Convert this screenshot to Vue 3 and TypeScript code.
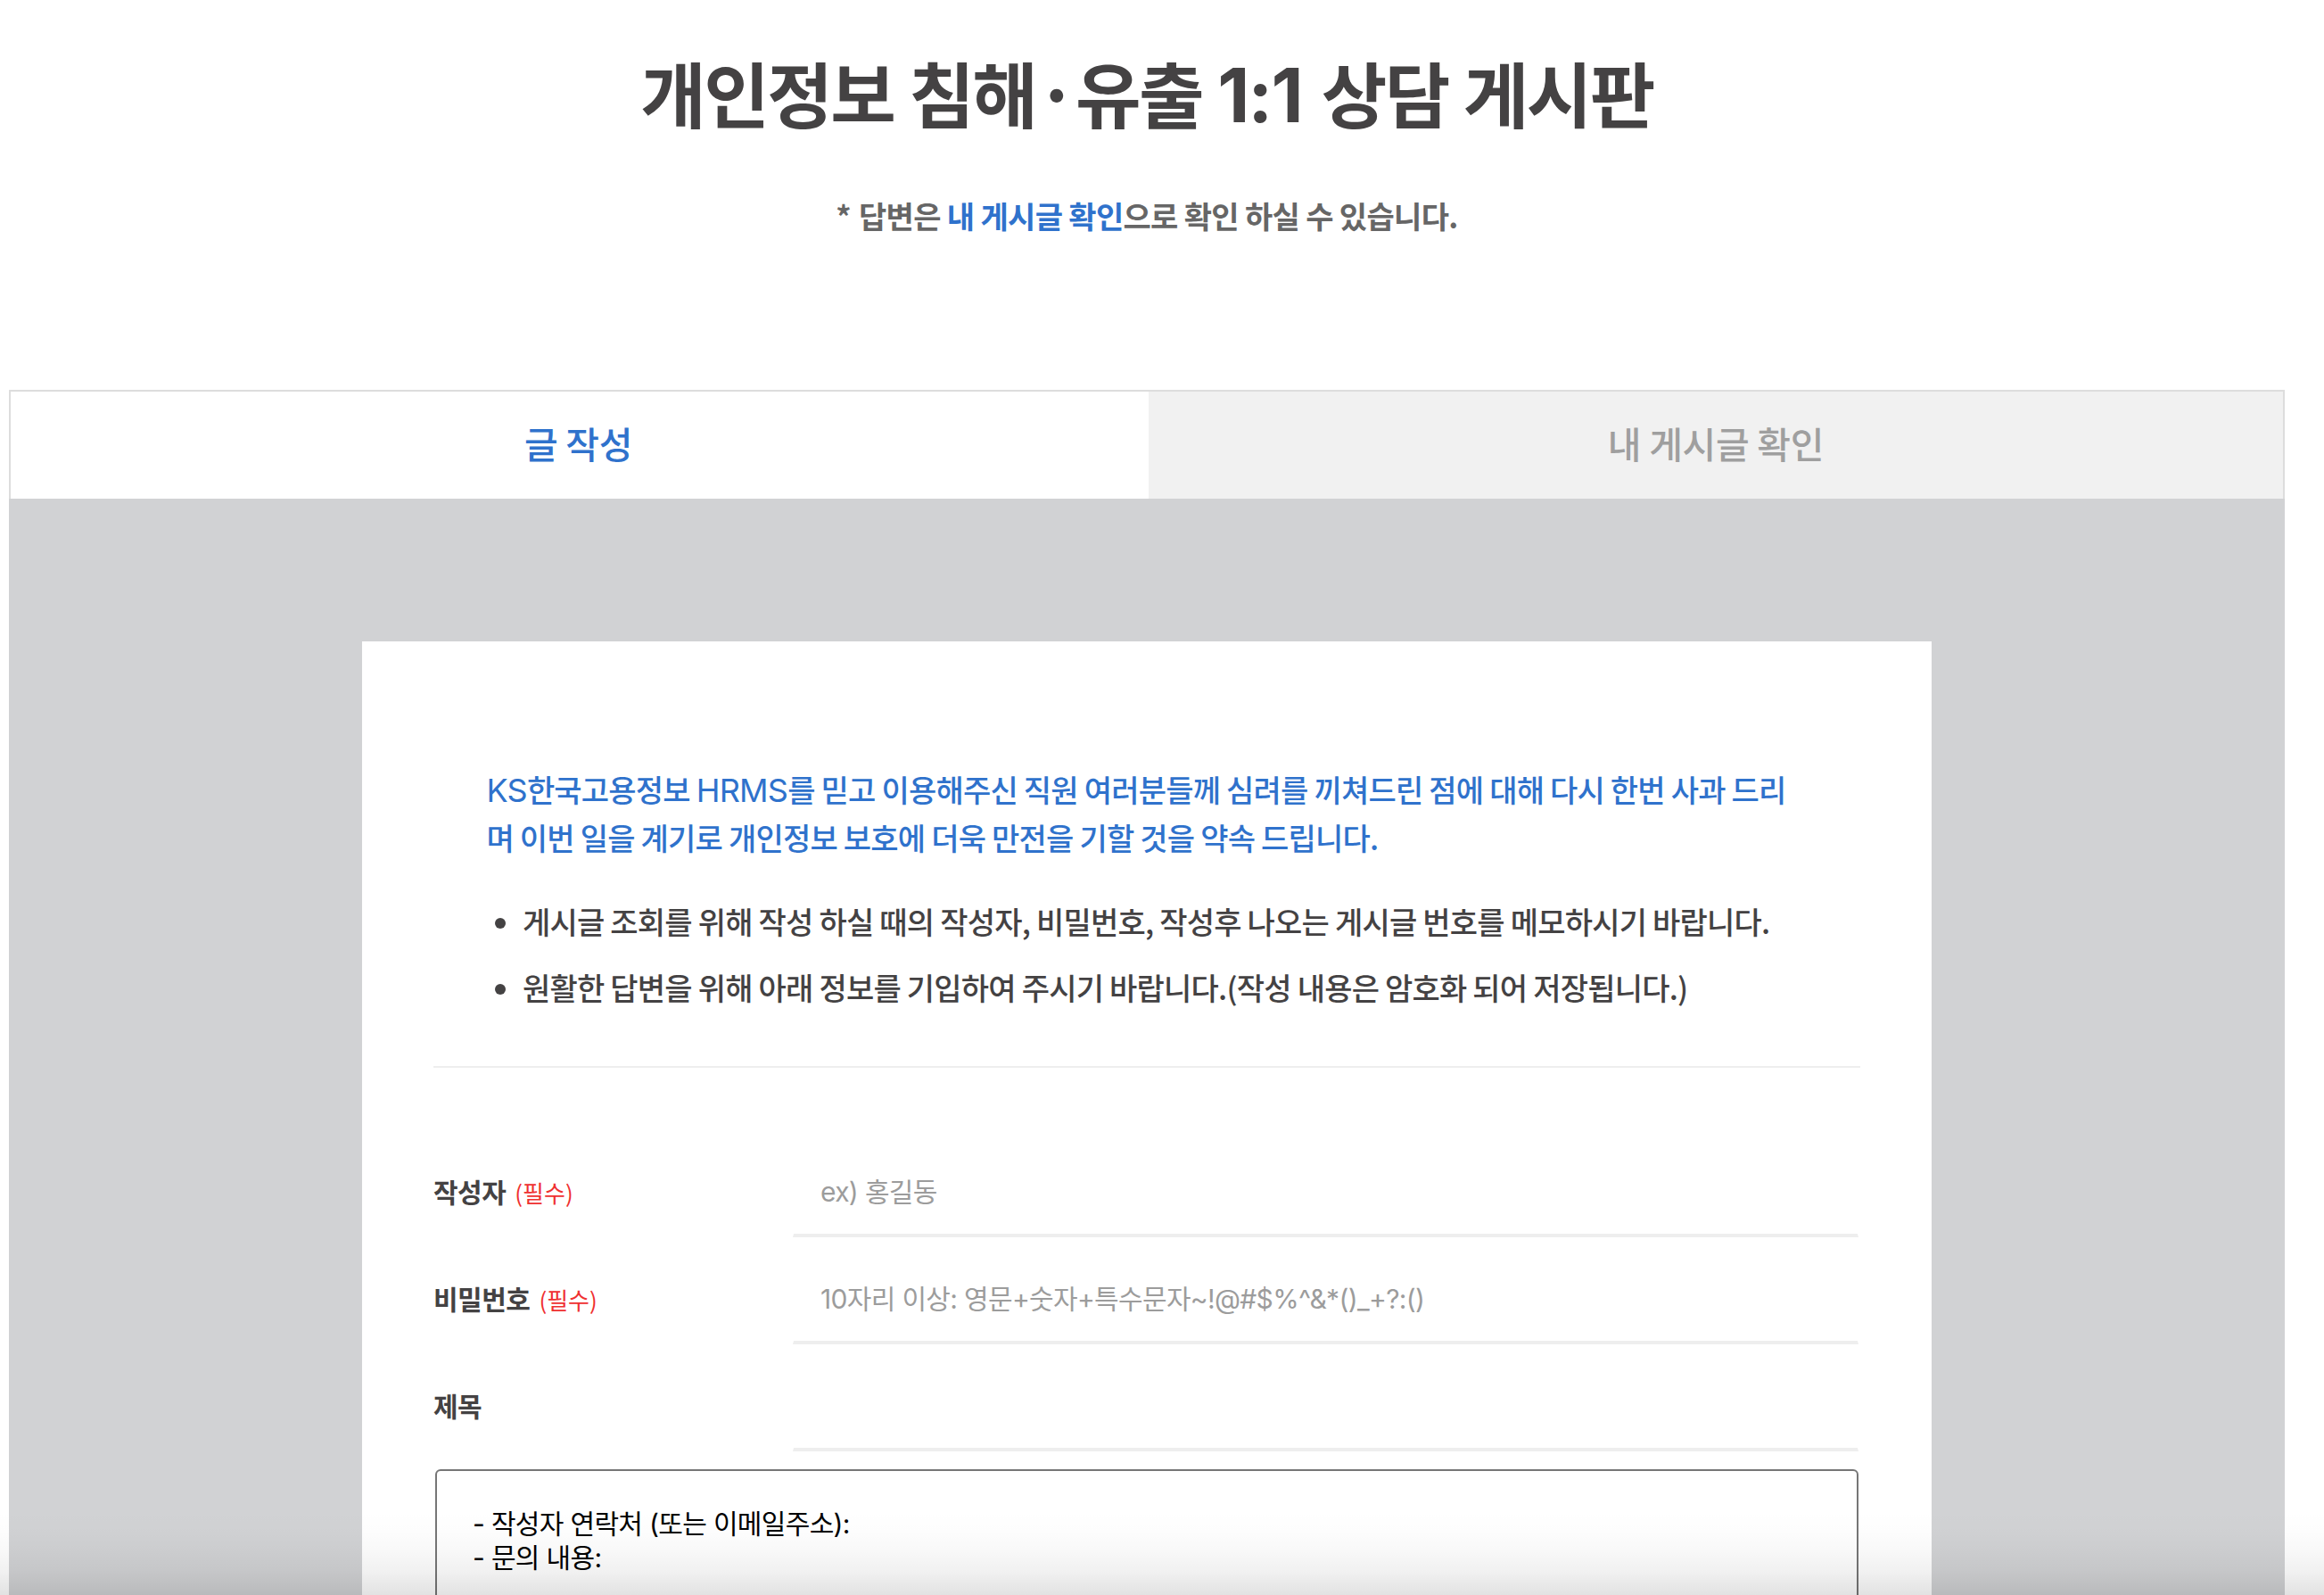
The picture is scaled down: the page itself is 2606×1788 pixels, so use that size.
<script setup lang="ts">
import { ref } from 'vue'

type TabId = 'write' | 'check'

interface Field {
  id: string
  label: string
  required: boolean
  placeholder: string
}

const tabs: { id: TabId; label: string }[] = [
  { id: 'write', label: '글 작성' },
  { id: 'check', label: '내 게시글 확인' },
]
const activeTab = ref<TabId>('write')

const notices: string[] = [
  '게시글 조회를 위해 작성 하실 때의 작성자, 비밀번호, 작성후 나오는 게시글 번호를 메모하시기 바랍니다.',
  '원활한 답변을 위해 아래 정보를 기입하여 주시기 바랍니다.(작성 내용은 암호화 되어 저장됩니다.)',
]

const fields: Field[] = [
  { id: 'writer', label: '작성자', required: true, placeholder: 'ex) 홍길동' },
  {
    id: 'password',
    label: '비밀번호',
    required: true,
    placeholder: '10자리 이상: 영문+숫자+특수문자~!@#$%^&*()_+?:()',
  },
  { id: 'subject', label: '제목', required: false, placeholder: '' },
]

const values = ref<Record<string, string>>({ writer: '', password: '', subject: '' })
const content = ref('- 작성자 연락처 (또는 이메일주소):\n- 문의 내용:')
</script>

<template>
  <div class="page">
    <header class="head">
      <h1 class="title">개인정보 침해·유출 <span class="ratio">1:1</span> 상담 게시판</h1>
      <p class="subtitle"><span class="mark">*</span> 답변은 <a class="link">내 게시글 확인</a>으로 확인 하실 수 있습니다.</p>
    </header>

    <nav class="tabs">
      <button
        v-for="tab in tabs"
        :key="tab.id"
        type="button"
        class="tab"
        :class="{ active: tab.id === activeTab }"
        @click="activeTab = tab.id"
      >
        {{ tab.label }}
      </button>
    </nav>

    <main class="panel">
      <section class="card">
        <div class="notice">
          <p class="apology">
            <span class="row"><span class="latin">KS</span>한국고용정보 <span class="latin">HRMS</span>를 믿고 이용해주신 직원 여러분들께 심려를 끼쳐드린 점에 대해 다시 한번 사과 드리</span>
            <span class="row">며 이번 일을 계기로 개인정보 보호에 더욱 만전을 기할 것을 약속 드립니다.</span>
          </p>
          <ul class="bullets">
            <li v-for="notice in notices" :key="notice">{{ notice }}</li>
          </ul>
        </div>

        <form class="form" @submit.prevent>
          <div v-for="field in fields" :key="field.id" class="field">
            <label class="label" :for="field.id">
              {{ field.label }}<em v-if="field.required" class="required">(필수)</em>
            </label>
            <input
              :id="field.id"
              v-model="values[field.id]"
              class="input"
              type="text"
              autocomplete="off"
              :placeholder="field.placeholder"
            />
          </div>
          <textarea v-model="content" class="content" spellcheck="false"></textarea>
        </form>
      </section>
    </main>
    <div class="fade"></div>
  </div>
</template>

<style>
body {
  margin: 0;
  background: #fff;
  overflow: hidden;
}
</style>

<style scoped>
.page {
  position: relative;
  box-sizing: border-box;
  display: flex;
  flex-direction: column;
  height: 1788px;
  padding: 0 44px 0 10px;
  overflow: hidden;
  font-family: 'Noto Sans CJK KR', sans-serif;
  color: #444243;
}
.head {
  flex: none;
  height: 437px;
  box-sizing: border-box;
  padding-top: 52px;
  text-align: center;
}
.title {
  margin: 0;
  font-size: 80px;
  font-weight: 700;
  line-height: 100px;
  letter-spacing: -2.6px;
  word-spacing: 1.5px;
  white-space: nowrap;
}
.ratio {
  margin-right: 5px;
  font-family: Inter, sans-serif;
  font-size: 84px;
  line-height: 1;
  letter-spacing: -2px;
}
.subtitle {
  margin: 70px 0 0;
  font-size: 34px;
  font-weight: 700;
  line-height: 40px;
  letter-spacing: -0.68px;
  color: #666;
}
.mark {
  margin-right: 2px;
}
.link {
  color: #2f72cc;
}
.tabs {
  display: flex;
  flex: none;
  box-sizing: border-box;
  height: 122px;
  border: 2px solid #ddd;
  border-bottom: 0;
}
.tab {
  flex: 1;
  padding: 0 0 6px;
  border: 0;
  background: #f1f1f1;
  font-family: inherit;
  font-size: 41px;
  font-weight: 500;
  letter-spacing: -0.3px;
  color: #9f9f9f;
}
.tab.active {
  flex: 0 0 1276px;
  padding-right: 3px;
  background: #fff;
  color: #2f72cc;
}
.panel {
  display: flex;
  flex: 1;
  min-height: 0;
  justify-content: center;
  box-sizing: border-box;
  padding-top: 160px;
  background: #d1d2d4;
}
.card {
  box-sizing: border-box;
  width: 1760px;
  height: 1400px;
  padding: 139px 80px 0;
  background: #fff;
}
.notice {
  box-sizing: border-box;
  height: 339px;
  padding: 0 58px;
  border-bottom: 2px solid #eee;
  font-size: 34px;
  font-weight: 500;
  line-height: 54px;
  letter-spacing: -0.78px;
  white-space: nowrap;
}
.apology {
  margin: 0;
  padding-left: 1.5px;
  color: #2f72cc;
}
.row {
  display: block;
}
.latin {
  font-family: Inter, sans-serif;
  font-size: 36px;
  font-weight: 400;
  line-height: 1;
}
.bullets {
  margin: 40px 0 0;
  padding: 0;
  list-style: none;
}
.bullets li {
  display: flex;
  align-items: center;
  margin-bottom: 20px;
}
.bullets li::before {
  content: '';
  width: 12px;
  height: 12px;
  margin: 4px 19px 0 11px;
  border-radius: 50%;
  background: currentColor;
}
.form {
  padding-top: 70px;
}
.field {
  display: flex;
  height: 120px;
}
.label {
  width: 403px;
  padding-top: 48px;
  font-size: 30px;
  font-weight: 700;
  line-height: 40px;
  letter-spacing: -0.5px;
}
.required {
  margin-left: 10px;
  font-size: 26px;
  font-style: normal;
  font-weight: 400;
  line-height: 1;
  letter-spacing: 0;
  color: #ef3030;
}
.input {
  box-sizing: border-box;
  width: 1195px;
  height: 120px;
  padding: 22px 30px 0;
  border: solid transparent;
  border-width: 0 1px 4px;
  border-bottom-color: #eee;
  outline: 0;
  background: transparent;
  font-family: Inter, 'Noto Sans CJK KR', sans-serif;
  font-size: 30px;
  letter-spacing: -0.67px;
}
.input::placeholder {
  color: #9c9c9c;
  opacity: 1;
}
.content {
  display: block;
  box-sizing: border-box;
  width: 1596px;
  height: 460px;
  margin: 20px 0 0 2px;
  padding: 40px;
  border: 2px solid #767676;
  border-radius: 6px;
  outline: 0;
  resize: none;
  background: #fff;
  color: #000;
  font-family: Inter, 'Noto Sans CJK KR', sans-serif;
  font-size: 30px;
  line-height: 38px;
  letter-spacing: -0.67px;
}
/* Soft shade along the bottom edge of the window */
.fade {
  position: absolute;
  right: 0;
  bottom: 0;
  left: 0;
  height: 96px;
  pointer-events: none;
  background: linear-gradient(
    rgba(0, 0, 0, 0) 0%,
    rgba(0, 0, 0, 0.008) 25%,
    rgba(0, 0, 0, 0.022) 45%,
    rgba(0, 0, 0, 0.055) 72%,
    rgba(0, 0, 0, 0.115) 100%
  );
}
</style>
